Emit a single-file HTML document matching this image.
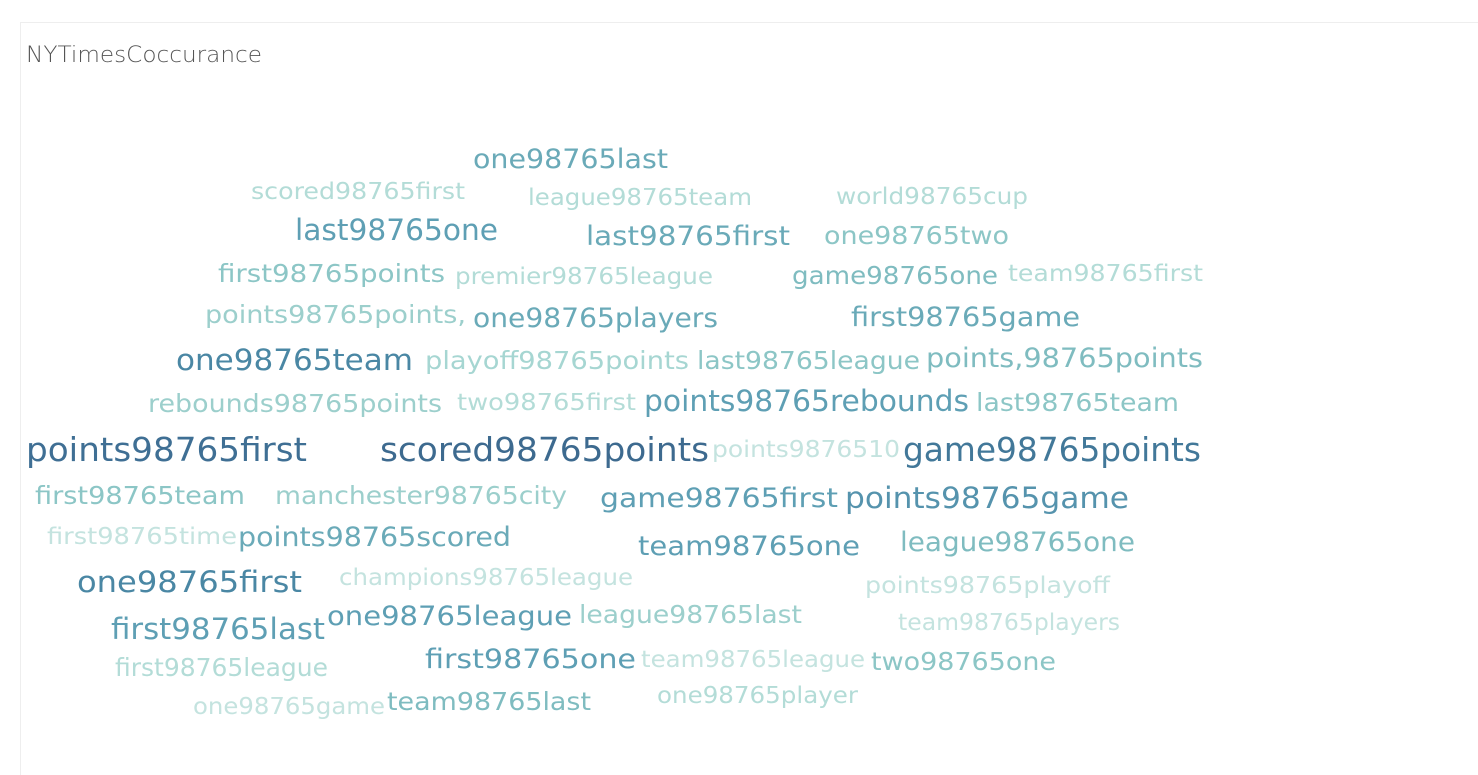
<!DOCTYPE html>
<html><head><meta charset="utf-8"><style>
html,body{margin:0;padding:0;background:#fff;width:1478px;height:775px;overflow:hidden}
svg{display:block}
text{font-family:"DejaVu Sans","Liberation Sans",sans-serif}
</style></head><body>
<svg width="1478" height="775" xmlns="http://www.w3.org/2000/svg">
<rect x="20.5" y="22.5" width="1470" height="760" fill="#fff" stroke="#eeeeee"/>
<text x="26" y="62" font-size="22" fill="#555" textLength="236" lengthAdjust="spacingAndGlyphs" font-weight="300">NYTimesCoccurance</text>
<g lengthAdjust="spacingAndGlyphs">
<text x="473" y="168" font-size="27" fill="#6aaab8" textLength="195" lengthAdjust="spacingAndGlyphs">one98765last</text>
<text x="251" y="199" font-size="23" fill="#b3dcd7" textLength="214" lengthAdjust="spacingAndGlyphs">scored98765first</text>
<text x="528" y="205" font-size="23" fill="#b3dcd7" textLength="224" lengthAdjust="spacingAndGlyphs">league98765team</text>
<text x="836" y="204" font-size="23" fill="#b3dcd7" textLength="192" lengthAdjust="spacingAndGlyphs">world98765cup</text>
<text x="295" y="240" font-size="29" fill="#5e9fb4" textLength="203" lengthAdjust="spacingAndGlyphs">last98765one</text>
<text x="586" y="245" font-size="27" fill="#6aaab8" textLength="204" lengthAdjust="spacingAndGlyphs">last98765first</text>
<text x="824" y="244" font-size="25" fill="#8cc6c6" textLength="185" lengthAdjust="spacingAndGlyphs">one98765two</text>
<text x="218" y="282" font-size="25" fill="#8cc6c6" textLength="227" lengthAdjust="spacingAndGlyphs">first98765points</text>
<text x="455" y="284" font-size="23" fill="#b3dcd7" textLength="258" lengthAdjust="spacingAndGlyphs">premier98765league</text>
<text x="792" y="284" font-size="25" fill="#7fbcc0" textLength="206" lengthAdjust="spacingAndGlyphs">game98765one</text>
<text x="1008" y="281" font-size="23" fill="#b3dcd7" textLength="195" lengthAdjust="spacingAndGlyphs">team98765first</text>
<text x="205" y="323" font-size="25" fill="#9ccfcc" textLength="261" lengthAdjust="spacingAndGlyphs">points98765points,</text>
<text x="473" y="327" font-size="27" fill="#6aaab8" textLength="245" lengthAdjust="spacingAndGlyphs">one98765players</text>
<text x="851" y="326" font-size="27" fill="#6aaab8" textLength="229" lengthAdjust="spacingAndGlyphs">first98765game</text>
<text x="176" y="370" font-size="29" fill="#4a87a4" textLength="237" lengthAdjust="spacingAndGlyphs">one98765team</text>
<text x="425" y="369" font-size="25" fill="#a6d6d2" textLength="264" lengthAdjust="spacingAndGlyphs">playoff98765points</text>
<text x="697" y="369" font-size="25" fill="#8cc6c6" textLength="223" lengthAdjust="spacingAndGlyphs">last98765league</text>
<text x="926" y="367" font-size="27" fill="#7fbcc0" textLength="277" lengthAdjust="spacingAndGlyphs">points,98765points</text>
<text x="148" y="412" font-size="25" fill="#9ccfcc" textLength="294" lengthAdjust="spacingAndGlyphs">rebounds98765points</text>
<text x="457" y="410" font-size="23" fill="#b3dcd7" textLength="179" lengthAdjust="spacingAndGlyphs">two98765first</text>
<text x="644" y="411" font-size="29" fill="#5e9fb4" textLength="325" lengthAdjust="spacingAndGlyphs">points98765rebounds</text>
<text x="976" y="411" font-size="25" fill="#8cc6c6" textLength="203" lengthAdjust="spacingAndGlyphs">last98765team</text>
<text x="26" y="461" font-size="33" fill="#3f6f94" textLength="281" lengthAdjust="spacingAndGlyphs">points98765first</text>
<text x="380" y="461" font-size="33" fill="#3d6a8f" textLength="329" lengthAdjust="spacingAndGlyphs">scored98765points</text>
<text x="712" y="457" font-size="23" fill="#c4e3df" textLength="188" lengthAdjust="spacingAndGlyphs">points9876510</text>
<text x="903" y="461" font-size="33" fill="#427899" textLength="298" lengthAdjust="spacingAndGlyphs">game98765points</text>
<text x="35" y="504" font-size="25" fill="#8cc6c6" textLength="210" lengthAdjust="spacingAndGlyphs">first98765team</text>
<text x="275" y="504" font-size="25" fill="#9ccfcc" textLength="292" lengthAdjust="spacingAndGlyphs">manchester98765city</text>
<text x="600" y="507" font-size="27" fill="#5e9fb4" textLength="238" lengthAdjust="spacingAndGlyphs">game98765first</text>
<text x="845" y="508" font-size="29" fill="#5593ad" textLength="284" lengthAdjust="spacingAndGlyphs">points98765game</text>
<text x="47" y="544" font-size="23" fill="#c4e3df" textLength="190" lengthAdjust="spacingAndGlyphs">first98765time</text>
<text x="238" y="546" font-size="27" fill="#6aaab8" textLength="273" lengthAdjust="spacingAndGlyphs">points98765scored</text>
<text x="638" y="555" font-size="27" fill="#5e9fb4" textLength="222" lengthAdjust="spacingAndGlyphs">team98765one</text>
<text x="900" y="551" font-size="27" fill="#7fbcc0" textLength="235" lengthAdjust="spacingAndGlyphs">league98765one</text>
<text x="77" y="592" font-size="29" fill="#4a87a4" textLength="225" lengthAdjust="spacingAndGlyphs">one98765first</text>
<text x="339" y="585" font-size="23" fill="#c4e3df" textLength="294" lengthAdjust="spacingAndGlyphs">champions98765league</text>
<text x="865" y="593" font-size="23" fill="#c4e3df" textLength="245" lengthAdjust="spacingAndGlyphs">points98765playoff</text>
<text x="111" y="639" font-size="29" fill="#5e9fb4" textLength="214" lengthAdjust="spacingAndGlyphs">first98765last</text>
<text x="327" y="625" font-size="27" fill="#5e9fb4" textLength="245" lengthAdjust="spacingAndGlyphs">one98765league</text>
<text x="579" y="623" font-size="25" fill="#9ccfcc" textLength="223" lengthAdjust="spacingAndGlyphs">league98765last</text>
<text x="898" y="630" font-size="23" fill="#c4e3df" textLength="222" lengthAdjust="spacingAndGlyphs">team98765players</text>
<text x="115" y="676" font-size="25" fill="#b3dcd7" textLength="213" lengthAdjust="spacingAndGlyphs">first98765league</text>
<text x="425" y="668" font-size="27" fill="#5e9fb4" textLength="211" lengthAdjust="spacingAndGlyphs">first98765one</text>
<text x="641" y="667" font-size="23" fill="#c4e3df" textLength="224" lengthAdjust="spacingAndGlyphs">team98765league</text>
<text x="871" y="670" font-size="25" fill="#8cc6c6" textLength="185" lengthAdjust="spacingAndGlyphs">two98765one</text>
<text x="193" y="714" font-size="23" fill="#c4e3df" textLength="192" lengthAdjust="spacingAndGlyphs">one98765game</text>
<text x="387" y="710" font-size="25" fill="#7fbcc0" textLength="204" lengthAdjust="spacingAndGlyphs">team98765last</text>
<text x="657" y="703" font-size="23" fill="#b3dcd7" textLength="201" lengthAdjust="spacingAndGlyphs">one98765player</text>
</g>
</svg>
</body></html>
